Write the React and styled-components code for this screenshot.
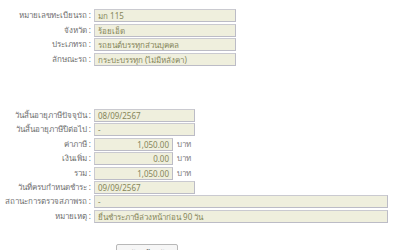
import styled, { createGlobalStyle } from 'styled-components';

const GlobalStyle = createGlobalStyle`
  html, body {
    margin: 0;
    padding: 0;
    background: #ffffff;
  }
  body {
    font-family: Tahoma, "Noto Sans", "DejaVu Sans", sans-serif;
    font-size: 8px;
    color: #555;
  }
`;

const Page = styled.div`
  width: 400px;
  height: 250px;
  overflow: hidden;
  padding-top: 9px;
  box-sizing: border-box;
`;

const Section = styled.div`
  display: flex;
  flex-direction: column;
  gap: ${(p) => p.$gap}px;
  margin-bottom: ${(p) => p.$after || 0}px;
`;

const Row = styled.div`
  display: flex;
  align-items: center;
  gap: 3px;
  height: 13px;
`;

const Label = styled.div`
  flex: 0 0 91px;
  text-align: right;
  white-space: nowrap;
  color: #707070;
`;

const Field = styled.div`
  flex: 0 0 ${(p) => p.$w}px;
  height: 13px;
  box-sizing: border-box;
  background: #efefdd;
  border: 1px solid #cacad0;
  border-right-color: #bcbcc6;
  border-bottom-color: #bcbcc6;
  color: #86865a;
  padding: 0 3px;
  line-height: 11px;
  white-space: nowrap;
  overflow: hidden;
  text-align: ${(p) => (p.$num ? 'right' : 'left')};
`;

const Unit = styled.span`
  color: #808080;
  padding-left: 1px;
`;

const ButtonBar = styled.div`
  padding-left: 116px;
`;

const Button = styled.button`
  width: 62px;
  height: 18px;
  font: inherit;
  color: #444;
  background: #f6f6f6;
  border: 1px solid #b8b8b8;
  border-radius: 2px;
  padding: 0;
  line-height: 12px;
  vertical-align: top;
`;

const car = [
  ['หมายเลขทะเบียนรถ :', 'มก 115'],
  ['จังหวัด :', 'ร้อยเอ็ด'],
  ['ประเภทรถ :', 'รถยนต์บรรทุกส่วนบุคคล'],
  ['ลักษณะรถ :', 'กระบะบรรทุก (ไม่มีหลังคา)'],
];

const tax = [
  { label: 'วันสิ้นอายุภาษีปัจจุบัน :', value: '08/09/2567', w: 101 },
  { label: 'วันสิ้นอายุภาษีปีต่อไป :', value: '-', w: 101 },
  { label: 'ค่าภาษี :', value: '1,050.00', w: 79, num: true, unit: 'บาท' },
  { label: 'เงินเพิ่ม :', value: '0.00', w: 79, num: true, unit: 'บาท' },
  { label: 'รวม :', value: '1,050.00', w: 79, num: true, unit: 'บาท' },
  { label: 'วันที่ครบกำหนดชำระ :', value: '09/09/2567', w: 101 },
  { label: 'สถานะการตรวจสภาพรถ :', value: '-', w: 294 },
  { label: 'หมายเหตุ :', value: 'ยื่นชำระภาษีล่วงหน้าก่อน 90 วัน', w: 294 },
];

export default function App() {
  return (
    <Page>
      <GlobalStyle />
      <Section $gap={1.7} $after={43}>
        {car.map(([label, value]) => (
          <Row key={label}>
            <Label>{label}</Label>
            <Field $w={142}>{value}</Field>
          </Row>
        ))}
      </Section>
      <Section $gap={1.4} $after={21}>
        {tax.map((r) => (
          <Row key={r.label}>
            <Label>{r.label}</Label>
            <Field $w={r.w} $num={r.num}>{r.value}</Field>
            {r.unit && <Unit>{r.unit}</Unit>}
          </Row>
        ))}
      </Section>
      <ButtonBar>
        <Button>กลับหน้าหลัก</Button>
      </ButtonBar>
    </Page>
  );
}
